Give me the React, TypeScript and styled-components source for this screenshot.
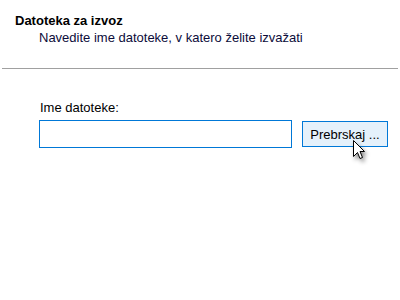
import React from 'react';
import styled, { createGlobalStyle } from 'styled-components';

const GlobalStyle = createGlobalStyle`
  html, body {
    margin: 0;
    padding: 0;
    background: #ffffff;
  }
  body {
    font-family: Tahoma, "Liberation Sans", Arial, sans-serif;
    font-size: 13px;
    color: #000000;
  }
`;

const Page = styled.div`
  width: 400px;
  height: 300px;
  overflow: hidden;
  background: #ffffff;
  display: flex;
  flex-direction: column;
`;

const Header = styled.header`
  box-sizing: border-box;
  height: 69px;
  margin: 0 2px;
  padding: 13px 0 0 13px;
  border-bottom: 1px solid #a0a0a0;
`;

const Title = styled.h1`
  margin: 0;
  font-size: 13px;
  line-height: 16px;
  font-weight: bold;
`;

const Subtitle = styled.p`
  margin: 1px 0 0 24px;
  font-size: 13px;
  line-height: 16px;
  color: #0c0c3a;
`;

const Body = styled.main`
  padding: 31px 0 0 39px;
  display: flex;
  flex-direction: column;
  gap: 4px;
`;

const Label = styled.label`
  padding-left: 1px;
  font-size: 13px;
  line-height: 16px;
`;

const Row = styled.div`
  display: flex;
  align-items: center;
  gap: 10px;
`;

const TextBox = styled.input`
  box-sizing: border-box;
  width: 253px;
  height: 28px;
  margin: 0;
  padding: 2px 4px;
  border: 1px solid #0078d7;
  background: #ffffff;
  font: inherit;
  outline: none;
`;

const Button = styled.button`
  position: relative;
  box-sizing: border-box;
  width: 86px;
  height: 26px;
  margin: 0;
  padding: 0;
  border: 1px solid #0078d7;
  background: #e5f1fb;
  font: inherit;
  color: #000000;
`;

const Cursor = styled.svg`
  position: absolute;
  left: 50px;
  top: 18px;
  overflow: visible;
  filter: drop-shadow(2px 3px 2px rgba(0, 0, 0, 0.45));
`;

export default function App() {
  return (
    <Page>
      <GlobalStyle />
      <Header>
        <Title>Datoteka za izvoz</Title>
        <Subtitle>Navedite ime datoteke, v katero želite izvažati</Subtitle>
      </Header>
      <Body>
        <Label htmlFor="file">Ime datoteke:</Label>
        <Row>
          <TextBox id="file" type="text" />
          <Button type="button">
            Prebrskaj ...
            <Cursor width="12" height="19" viewBox="0 0 12 19">
              <path
                d="M0.5 0.5 L0.5 16.5 L4.5 12.5 L7 18.5 L9.5 17.5 L7 11.5 L11.5 11.5 Z"
                fill="#ffffff"
                stroke="#000000"
                strokeWidth="1"
                strokeLinejoin="miter"
              />
            </Cursor>
          </Button>
        </Row>
      </Body>
    </Page>
  );
}
